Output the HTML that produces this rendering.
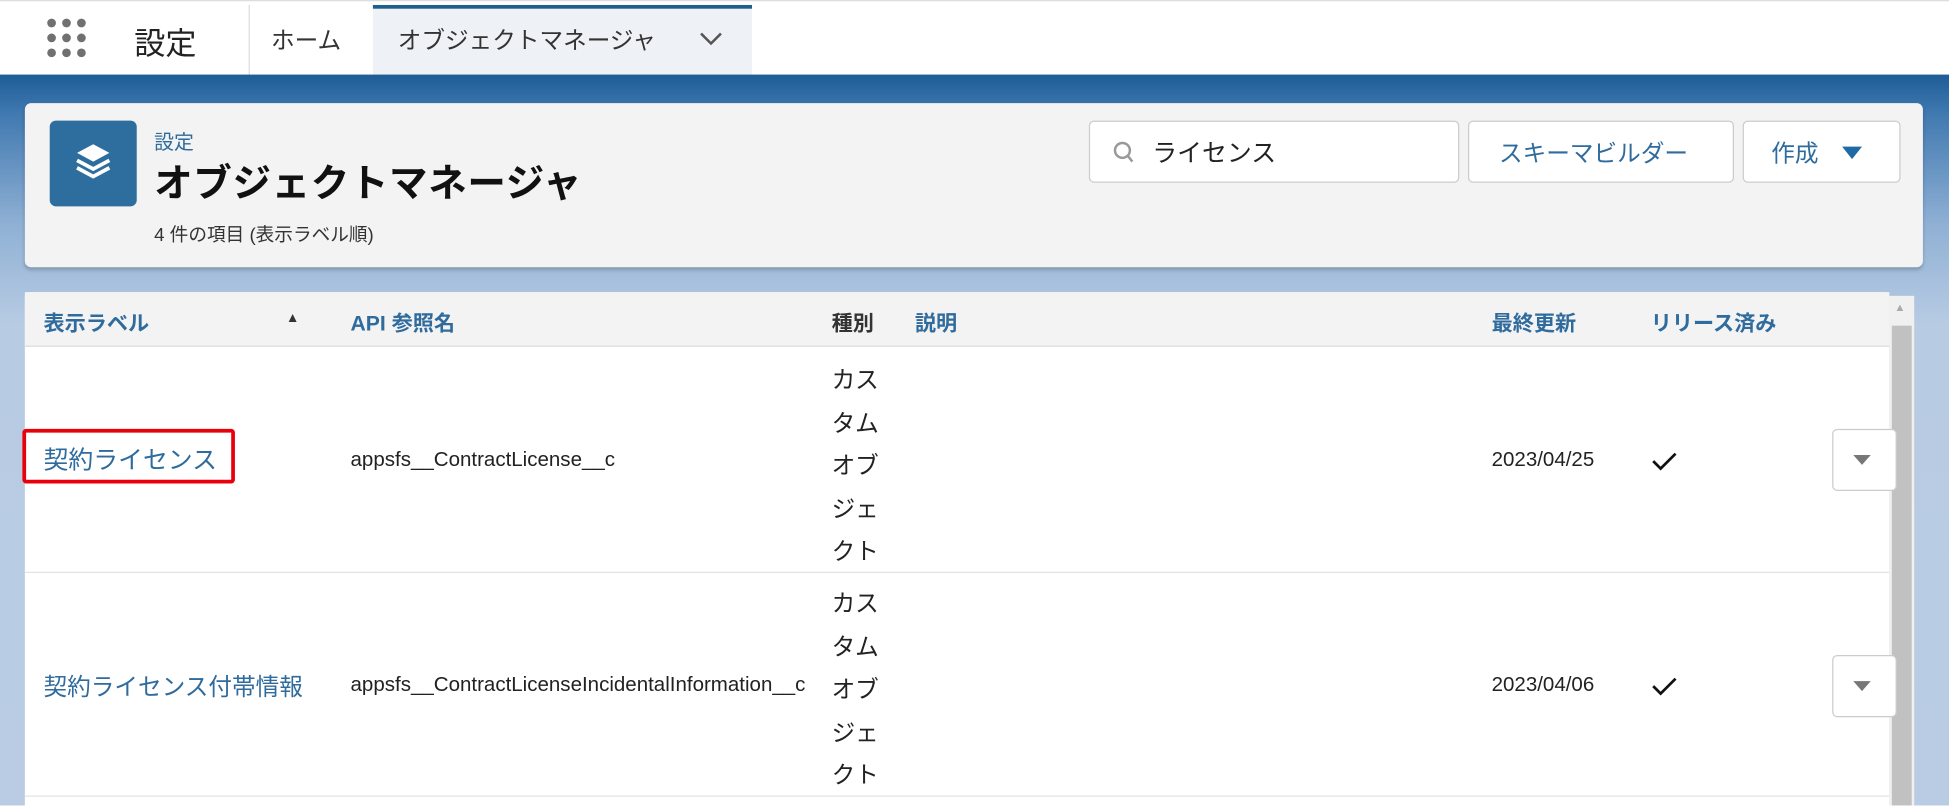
<!DOCTYPE html>
<html><head><meta charset="utf-8">
<style>
html,body{margin:0;padding:0;width:1949px;height:806px;overflow:hidden;background:#fff}
#w{position:absolute;left:0;top:0;width:1568px;height:648px;transform:scale(1.243);transform-origin:0 0;font-family:"Liberation Sans","Noto Sans CJK JP",sans-serif;overflow:hidden}
.a{position:absolute}
.nav{left:0;top:0;width:1568px;height:60px;background:#fff;border-top:1px solid #ddd}
.band{left:0;top:60px;width:1568px;height:588px;background:linear-gradient(#1d5c96 0px,#3f78b0 30px,#8fb0d4 120px,#b7cbe3 200px,#b9cce3 588px)}
.card{background:#f3f3f3;border-radius:5px;box-shadow:0 2px 3px rgba(0,0,0,.2)}
.hd{color:#2f6b9c;font-weight:bold;font-size:17px}
.t{font-size:16.5px;color:#222}
.btn{background:#fff;border:1px solid #ccc;border-radius:4px}
.dot{width:7px;height:7px;border-radius:50%;background:#707070;position:absolute}
</style></head><body><div id="w">
<div class="a nav"></div>
<div class="a" style="left:38px;top:15px;width:34px;height:34px">
<div class="dot" style="left:0;top:0"></div><div class="dot" style="left:12px;top:0"></div><div class="dot" style="left:24px;top:0"></div>
<div class="dot" style="left:0;top:12px"></div><div class="dot" style="left:12px;top:12px"></div><div class="dot" style="left:24px;top:12px"></div>
<div class="dot" style="left:0;top:24px"></div><div class="dot" style="left:12px;top:24px"></div><div class="dot" style="left:24px;top:24px"></div>
</div>
<div class="a" style="left:108px;top:16px;font-size:25px;color:#222">設定</div>
<div class="a" style="left:200px;top:4px;width:1px;height:56px;background:#ddd"></div>
<div class="a" style="left:218px;top:18px;font-size:19px;color:#333">ホーム</div>
<div class="a" style="left:300px;top:4px;width:305px;height:56px;background:#eef1f5;border-top:3px solid #1f5f8c;box-sizing:border-box"></div>
<div class="a" style="left:320px;top:18px;font-size:19px;color:#333">オブジェクトマネージャ</div>
<svg class="a" style="left:562px;top:24px" width="20" height="14"><path d="M2 3 L10 11 L18 3" stroke="#555" stroke-width="2" fill="none"/></svg>
<div class="a band"></div>
<div class="a card" style="left:20px;top:83px;width:1527px;height:132px"></div>
<div class="a" style="left:40px;top:97px;width:70px;height:69px;background:#2e6e9e;border-radius:5px"></div>
<svg class="a" style="left:58px;top:113px" width="34" height="36" viewBox="0 0 34 36"><path d="M17 3 L30 10 L17 17 L4 10Z" fill="#fff"/><path d="M4 16 L17 23 L30 16" stroke="#fff" stroke-width="3" fill="none"/><path d="M4 22 L17 29 L30 22" stroke="#fff" stroke-width="3" fill="none"/></svg>
<div class="a" style="left:124px;top:101px;font-size:16px;color:#2f6b9c">設定</div>
<div class="a" style="left:124px;top:122px;font-size:31px;font-weight:bold;color:#111;letter-spacing:0.5px">オブジェクトマネージャ</div>
<div class="a" style="left:124px;top:178px;font-size:15px;color:#333">4 件の項目 (表示ラベル順)</div>
<div class="a btn" style="left:876px;top:97px;width:296px;height:48px"></div>
<svg class="a" style="left:895px;top:113px" width="18" height="20"><circle cx="8" cy="8" r="6" stroke="#999" stroke-width="2" fill="none"/><path d="M12 12 L16 17" stroke="#999" stroke-width="2"/></svg>
<div class="a" style="left:927px;top:107px;font-size:20px;color:#222">ライセンス</div>
<div class="a btn" style="left:1181px;top:97px;width:212px;height:48px"></div>
<div class="a" style="left:1206px;top:109px;font-size:19px;color:#2f6b9c">スキーマビルダー</div>
<div class="a btn" style="left:1402px;top:97px;width:125px;height:48px"></div>
<div class="a" style="left:1425px;top:109px;font-size:19px;color:#2f6b9c">作成</div>
<svg class="a" style="left:1480px;top:116px" width="20" height="14"><path d="M2 2 L18 2 L10 12Z" fill="#1f6aa5"/></svg>
<div class="a" style="left:20px;top:235px;width:1500px;height:413px;background:#fff;border-radius:4px 4px 0 0"></div>
<div class="a" style="left:20px;top:235px;width:1500px;height:43px;background:#f3f3f3;border-bottom:1px solid #ddd"></div>
<div class="a hd" style="left:35px;top:246px">表示ラベル</div>
<div class="a" style="left:230px;top:250px;font-size:11px;color:#333">▲</div>
<div class="a hd" style="left:282px;top:246px">API 参照名</div>
<div class="a" style="left:669px;top:246px;font-size:17px;font-weight:bold;color:#333">種別</div>
<div class="a hd" style="left:736px;top:246px">説明</div>
<div class="a hd" style="left:1200px;top:246px">最終更新</div>
<div class="a hd" style="left:1328px;top:246px">リリース済み</div>
<div class="a" style="left:1520px;top:238px;width:20px;height:410px;background:#f0f0f0"></div>
<div class="a" style="left:1522px;top:262px;width:16px;height:386px;background:#c1c1c1"></div>
<div class="a" style="left:1524px;top:242px;font-size:9px;color:#aaa">▲</div>
<div class="a" style="left:20px;top:460px;width:1500px;height:1px;background:#e3e3e3"></div>
<div class="a" style="left:20px;top:640px;width:1500px;height:1px;background:#e3e3e3"></div>
<div class="a" style="left:18px;top:345px;width:165px;height:38px;border:3px solid #e8000b;border-radius:3px"></div>
<div class="a" style="left:35px;top:354px;font-size:20px;color:#2f6b9c">契約ライセンス</div>
<div class="a t" style="left:282px;top:361px">appsfs__ContractLicense__c</div>
<div class="a" style="left:669px;top:290px;font-size:19px;line-height:34.5px;color:#222">カス<br>タム<br>オブ<br>ジェ<br>クト</div>
<div class="a t" style="left:1200px;top:361px">2023/04/25</div>
<svg class="a" style="left:1328px;top:362px" width="22" height="18"><path d="M2 9 L8 15 L20 3" stroke="#111" stroke-width="2.2" fill="none"/></svg>
<div class="a btn" style="left:1474px;top:345px;width:50px;height:48px"></div>
<svg class="a" style="left:1490px;top:365px" width="16" height="10"><path d="M1 1 L15 1 L8 9Z" fill="#777"/></svg>
<div class="a" style="left:35px;top:538px;font-size:19px;color:#2f6b9c">契約ライセンス付帯情報</div>
<div class="a t" style="left:282px;top:542px;width:375px;overflow:hidden;white-space:nowrap">appsfs__ContractLicenseIncidentalInformation__c</div>
<div class="a" style="left:669px;top:470px;font-size:19px;line-height:34.5px;color:#222">カス<br>タム<br>オブ<br>ジェ<br>クト</div>
<div class="a t" style="left:1200px;top:542px">2023/04/06</div>
<svg class="a" style="left:1328px;top:543px" width="22" height="18"><path d="M2 9 L8 15 L20 3" stroke="#111" stroke-width="2.2" fill="none"/></svg>
<div class="a btn" style="left:1474px;top:527px;width:50px;height:48px"></div>
<svg class="a" style="left:1490px;top:547px" width="16" height="10"><path d="M1 1 L15 1 L8 9Z" fill="#777"/></svg>
</div></body></html>
